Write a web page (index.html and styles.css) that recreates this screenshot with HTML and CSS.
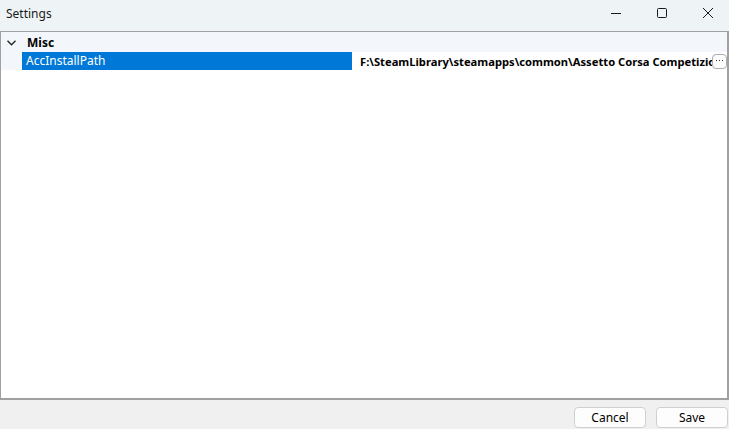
FILE: index.html
```html
<!DOCTYPE html>
<html lang="en">
<head>
    <meta charset="UTF-8">
    <meta name="viewport" content="width=device-width, initial-scale=1.0">
    <title>Settings</title>
    <link rel="stylesheet" href="styles.css">
</head>
<body>
    <div class="window">
        <header class="titlebar">
            <div class="title">Settings</div>
            <div class="caption-buttons">
                <div class="caption-btn">
                    <svg width="10" height="10" viewBox="0 0 10 10"><path d="M0 5.5H10" stroke="#1a1a1a" stroke-width="1"/></svg>
                </div>
                <div class="caption-btn">
                    <svg width="10" height="10" viewBox="0 0 10 10"><rect x="0.5" y="0.5" width="9" height="9" rx="1" fill="none" stroke="#1a1a1a" stroke-width="1"/></svg>
                </div>
                <div class="caption-btn">
                    <svg width="10" height="10" viewBox="0 0 10 10"><path d="M0 0L10 10M10 0L0 10" stroke="#1a1a1a" stroke-width="1"/></svg>
                </div>
            </div>
        </header>

        <div class="grid">
            <div class="category">
                <div class="toggle">
                    <svg width="9" height="6" viewBox="0 0 9 6"><path d="M0.5 0.8L4.5 4.8L8.5 0.8" fill="none" stroke="#222" stroke-width="1.3"/></svg>
                </div>
                <div class="category-name">Misc</div>
            </div>
            <div class="property">
                <div class="margin"></div>
                <div class="prop-name selected">AccInstallPath</div>
                <div class="prop-value">
                    <span class="value-text">F:\SteamLibrary\steamapps\common\Assetto Corsa Competizione</span>
                    <button class="ellipsis">
                        <svg width="7" height="2" viewBox="0 0 7 2"><rect x="0" y="0" width="1" height="1" fill="#333"/><rect x="3" y="0" width="1" height="1" fill="#333"/><rect x="6" y="0" width="1" height="1" fill="#333"/></svg>
                    </button>
                </div>
            </div>
            <div class="empty"></div>
        </div>

        <footer class="actions">
            <button class="btn">Cancel</button>
            <button class="btn">Save</button>
        </footer>
    </div>
</body>
</html>
```

FILE: styles.css
```css
* {
    box-sizing: border-box;
}

body {
    margin: 0;
    padding: 0;
    font-family: "Noto Sans", "Open Sans", sans-serif;
    font-size: 12px;
    color: #000;
    background-color: #f0f0f0;
}

.window {
    width: 729px;
    height: 429px;
    display: flex;
    flex-direction: column;
    overflow: hidden;
}

.titlebar {
    height: 31px;
    flex-shrink: 0;
    display: flex;
    justify-content: space-between;
    align-items: center;
    background-color: #eef4f5;
}

.titlebar .title {
    padding-left: 6px;
    padding-bottom: 4px;
    font-size: 12px;
    color: #1a1a1a;
}

.caption-buttons {
    display: flex;
    height: 100%;
    margin-right: -2px;
}

.caption-btn {
    width: 46px;
    display: flex;
    align-items: center;
    justify-content: center;
    padding-bottom: 5px;
}

.grid {
    flex: 1;
    display: flex;
    flex-direction: column;
    background-color: #fff;
    border: 1px solid #a0a0a0;
    border-right-width: 2px;
    border-bottom-width: 2px;
}

.category {
    height: 20px;
    display: flex;
    align-items: center;
    background-color: #f3f6fa;
}

.category .toggle {
    width: 22px;
    display: flex;
    justify-content: center;
    padding-top: 1px;
    padding-right: 2px;
}

.category .category-name {
    font-weight: bold;
    padding-left: 4px;
}

.property {
    height: 18px;
    display: flex;
}

.property .margin {
    width: 21px;
    background-color: #f3f6fa;
}

.property .prop-name {
    width: 330px;
    padding-left: 4px;
    line-height: 18px;
    white-space: nowrap;
}

.property .prop-name.selected {
    background-color: #0078d7;
    color: #fff;
}

.property .prop-value {
    flex: 1;
    min-width: 0;
    display: flex;
    align-items: center;
    margin-left: 4px;
    padding-left: 4px;
}

.property .value-text {
    flex: 1;
    min-width: 0;
    font-size: 11.2px;
    font-weight: bold;
    white-space: nowrap;
    overflow: hidden;
}

.property .ellipsis {
    width: 15px;
    height: 15px;
    flex-shrink: 0;
    margin-right: 0;
    padding: 0;
    border: 1px solid #adadad;
    border-radius: 4px;
    background-color: #fdfdfd;
    display: flex;
    align-items: center;
    justify-content: center;
}

.empty {
    flex: 1;
}

.actions {
    height: 29px;
    flex-shrink: 0;
    display: flex;
    justify-content: flex-end;
    align-items: center;
    gap: 10px;
    padding-right: 1px;
    padding-top: 5px;
}

.btn {
    width: 72px;
    height: 21px;
    font-family: "Noto Sans", "Open Sans", sans-serif;
    font-size: 12px;
    color: #000;
    background-color: #fdfdfd;
    border: 1px solid #d0d0d0;
    border-radius: 4px;
    padding: 0;
}
```
